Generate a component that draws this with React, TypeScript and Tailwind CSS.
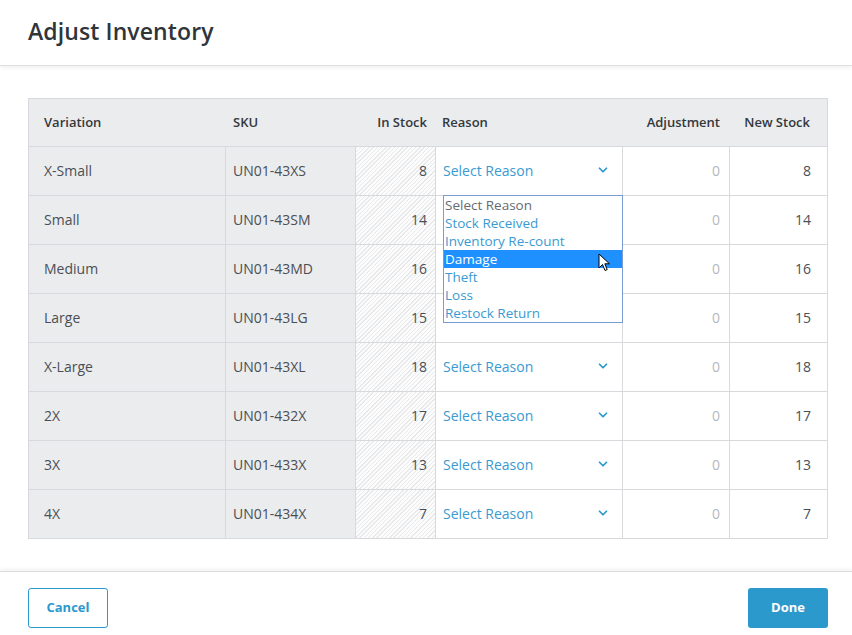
import { ChevronDown } from "lucide-react";

const rows = [
  { name: "X-Small", sku: "UN01-43XS", stock: 8 },
  { name: "Small", sku: "UN01-43SM", stock: 14 },
  { name: "Medium", sku: "UN01-43MD", stock: 16 },
  { name: "Large", sku: "UN01-43LG", stock: 15 },
  { name: "X-Large", sku: "UN01-43XL", stock: 18 },
  { name: "2X", sku: "UN01-432X", stock: 17 },
  { name: "3X", sku: "UN01-433X", stock: 13 },
  { name: "4X", sku: "UN01-434X", stock: 7 },
];

const options = [
  "Select Reason",
  "Stock Received",
  "Inventory Re-count",
  "Damage",
  "Theft",
  "Loss",
  "Restock Return",
];

const cols = "grid grid-cols-[197px_130px_80px_187px_107px_98px]";
const cell = "h-[49px] pb-[2px] border-r border-b border-[#d7d9dc] flex items-center whitespace-nowrap";
const head = "h-[48px] border-b border-[#d7d9dc] flex items-center whitespace-nowrap";

function Cursor() {
  return (
    <svg width="14" height="20" viewBox="0 0 14 20" className="absolute left-[154px] top-[57px]">
      <path
        d="M1 1 L1 15 L4.5 11.5 L7 17.5 L9.2 16.6 L6.8 10.8 L11.5 10.8 Z"
        fill="#fff"
        stroke="#000"
        strokeWidth="1"
        strokeLinejoin="round"
      />
    </svg>
  );
}

function Listbox() {
  return (
    <div className="absolute left-[7px] top-[48px] w-[180px] border border-[#7a9cd3] bg-white z-10">
      {options.map((o, i) => (
        <div
          key={o}
          className={
            "h-[18px] leading-[18px] px-px text-[13.5px] " +
            (i === 3
              ? "bg-[#1e90ff] text-white"
              : i === 0
              ? "text-[#666b70]"
              : "text-[#3a9ad2]")
          }
        >
          {o}
        </div>
      ))}
      <Cursor />
    </div>
  );
}

export default function App() {
  return (
    <div className="w-[852px] h-[635px] bg-white flex flex-col font-['Open_Sans',sans-serif] text-[#4a4f55] overflow-hidden">
      <div className="h-[66px] shrink-0 flex items-center px-[28px] border-b border-[#dedfe1] shadow-[0_2px_4px_rgba(0,0,0,0.06)] relative z-10">
        <h1 className="text-[23px] font-semibold text-[#30353a] tracking-[0.1px] -mt-[3px]">
          Adjust Inventory
        </h1>
      </div>

      <div className="flex-1 pl-[28px] pr-[24px] pt-[32px]">
        <div className="w-[800px] border-l border-t border-[#d7d9dc] text-[14px]">
          <div className={cols + " bg-[#ebecee] text-[13px] font-semibold text-[#33383d]"}>
            <div className={head + " px-[15px]"}>Variation</div>
            <div className={head + " px-[7px]"}>SKU</div>
            <div className={head + " justify-end px-[9px]"}>In Stock</div>
            <div className={head + " px-[6px]"}>Reason</div>
            <div className={head + " justify-end px-[10px]"}>Adjustment</div>
            <div className={head + " border-r justify-end px-[17px]"}>New Stock</div>
          </div>
          {rows.map((r, i) => (
            <div key={r.sku} className={cols}>
              <div className={cell + " bg-[#ebecee] px-[15px]"}>{r.name}</div>
              <div className={cell + " bg-[#ebecee] px-[7px]"}>{r.sku}</div>
              <div className={cell + " justify-end px-[8px] bg-[repeating-linear-gradient(135deg,#e8e9eb_0,#e8e9eb_1px,#fcfcfc_1px,#fcfcfc_3px)]"}>
                {r.stock}
              </div>
              <div className={cell + " relative px-[7px] justify-between text-[#3a9ad2]"}>
                {i >= 1 && i <= 3 ? null : (
                  <>
                    <span>Select Reason</span>
                    <ChevronDown size={14} strokeWidth={3} className="mr-[5px] text-[#2b99cc]" />
                  </>
                )}
                {i === 0 && <Listbox />}
              </div>
              <div className={cell + " justify-end px-[9px] text-[#b5b8bc]"}>0</div>
              <div className={cell + " justify-end px-[16px]"}>{r.stock}</div>
            </div>
          ))}
        </div>
      </div>

      <div className="h-[64px] shrink-0 border-t border-[#dcdde0] shadow-[0_-2px_4px_rgba(0,0,0,0.06)] flex items-start justify-between pl-[28px] pr-[24px] pt-[16px]">
        <button className="w-[80px] h-[40px] rounded-[3px] border border-[#2b99cc] text-[#2b99cc] text-[13px] font-bold bg-white">
          Cancel
        </button>
        <button className="w-[80px] h-[40px] rounded-[3px] bg-[#2b99cc] text-white text-[13px] font-bold">
          Done
        </button>
      </div>
    </div>
  );
}
